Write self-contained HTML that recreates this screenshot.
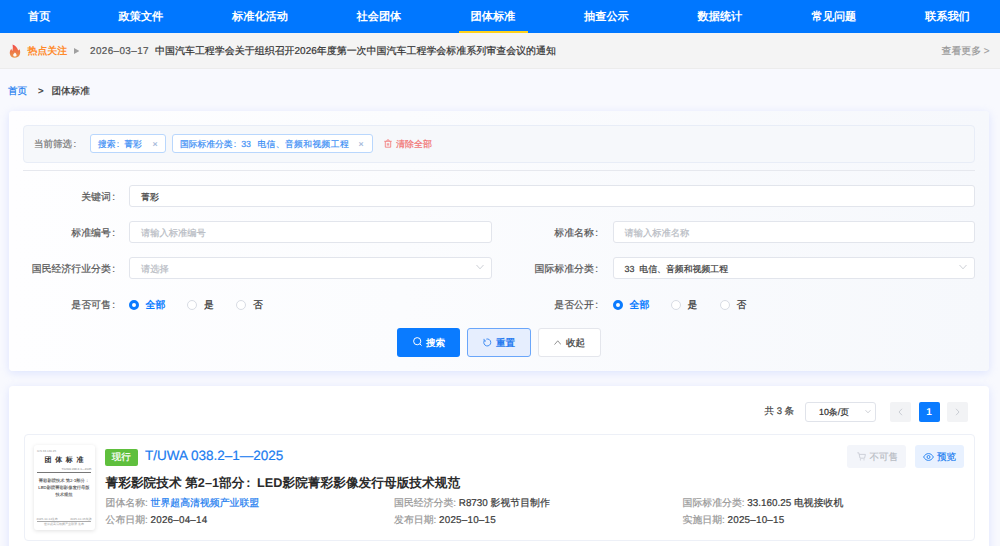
<!DOCTYPE html>
<html><head><meta charset="utf-8">
<style>
*{box-sizing:border-box;margin:0;padding:0}
html,body{width:1000px;height:546px;overflow:hidden}
body{text-rendering:geometricPrecision;-webkit-text-stroke-width:.2px;font-family:"Liberation Sans",sans-serif;background:#f8f9fe;position:relative;color:#333}
.a{position:absolute;white-space:nowrap}
#nav{position:absolute;left:0;top:0;width:1000px;height:33px;background:#0077ff}
#nav .it{position:absolute;top:9.5px;font-size:11.2px;line-height:14px;font-weight:bold;-webkit-text-stroke-width:0;color:#fff}
#nav .ul{position:absolute;left:459px;top:30.5px;width:68.5px;height:2.5px;background:#ffd21a}
#hot{position:absolute;left:0;top:33px;width:1000px;height:36px;background:#f4f4f4;border-bottom:1px solid #ececec}
#hot .t{font-size:9.9px;line-height:12px;top:12.5px}
.card{position:absolute;background:#fdfdff;border-radius:4px;box-shadow:0 2px 8px rgba(165,182,255,.32)}
.lbl{font-size:9.9px;line-height:12px;color:#555;text-align:right}
.inp{position:absolute;height:22px;background:#fff;border:1px solid #e2e5ec;border-radius:3px}
.ph{position:absolute;left:11px;top:4.5px;font-size:9.25px;line-height:12px;color:#b8bcc4;white-space:nowrap}
.val{position:absolute;left:11px;top:4.5px;font-size:8.9px;line-height:12px;color:#3a3a3a;white-space:nowrap}
.chev{position:absolute;right:7.5px;top:6px;width:8px;height:6px}
.radio{position:absolute;width:10px;height:10px;border-radius:50%;border:1px solid #d8dce4;background:#fff}
.radio.on{border:3px solid #0a7bff}
.rt{font-size:9.9px;line-height:12px;color:#333}
.rt.on{color:#0a7bff;font-weight:bold;-webkit-text-stroke-width:0}
.tag{position:absolute;top:134px;height:19px;border:1px solid #b9d7fd;border-radius:3px;background:#fff}
.tag span{position:absolute;top:3px;font-size:8.75px;line-height:12px;color:#3d8ff5;white-space:nowrap}
.fc{display:inline-block;font-style:normal;width:1em;padding-left:.15em}
.cl{margin-left:1.5px}
b,.bd{-webkit-text-stroke-width:0}
.btn{position:absolute;top:328px;height:28.5px;border-radius:3px}
</style></head><body>

<div id="nav">
  <div class="it" style="left:28px">首页</div>
  <div class="it" style="left:118.5px">政策文件</div>
  <div class="it" style="left:232px">标准化活动</div>
  <div class="it" style="left:356.5px">社会团体</div>
  <div class="it" style="left:470.5px">团体标准</div>
  <div class="it" style="left:584px">抽查公示</div>
  <div class="it" style="left:697.5px">数据统计</div>
  <div class="it" style="left:811.5px">常见问题</div>
  <div class="it" style="left:925px">联系我们</div>
  <div class="ul"></div>
</div>

<div id="hot">
  <svg class="a" style="left:9px;top:10.5px" width="12" height="14" viewBox="0 0 12 14">
    <defs><linearGradient id="fg" x1="0" y1="0" x2="0" y2="1"><stop offset="0" stop-color="#f2484a"/><stop offset=".55" stop-color="#ee7a48"/><stop offset="1" stop-color="#e9974e"/></linearGradient></defs>
    <path d="M3.6 0.5C6.6 1.8 8.6 3.8 9.2 6.6C9.6 6.2 10.1 5.8 10.4 5.3C11.4 7 11.5 9.2 10.6 11C9.7 12.8 7.9 13.8 5.8 13.8C3.2 13.8 1 12 0.8 9.4C0.6 7.6 1.4 6 2.4 4.8C2.5 5.8 2.8 6.6 3.4 7C3.9 4.8 4 2.6 3.6 0.5Z" fill="url(#fg)"/>
    <path d="M5.8 8.4C6.7 9.2 7.7 10 7.6 11.2C7.5 12.2 6.7 12.6 5.9 12.6C5 12.6 4.2 12 4.2 11C4.2 9.9 5.2 9.3 5.8 8.4Z" fill="#fff" opacity=".95"/>
  </svg>
  <div class="a t" style="left:27.5px;color:#ff8a2c;font-weight:bold;-webkit-text-stroke-width:0">热点关注</div>
  <svg class="a" style="left:73.5px;top:15px" width="5.5" height="6" viewBox="0 0 5.5 6"><path d="M0 0L5.5 3L0 6Z" fill="#a0a0a0"/></svg>
  <div class="a t" style="left:90px;color:#555;letter-spacing:0.4px">2026–03–17</div>
  <div class="a t" style="left:155px;color:#333;font-size:9.98px">中国汽车工程学会关于组织召开2026年度第一次中国汽车工程学会标准系列审查会议的通知</div>
  <div class="a t" style="left:941.5px;color:#999">查看更多 &gt;</div>
</div>

<div class="a" style="left:8px;top:86px;font-size:9.6px;line-height:12px;color:#1a7cf0">首页</div>
<div class="a" style="left:38px;top:86px;font-size:9.6px;line-height:12px;color:#333">&gt;</div>
<div class="a" style="left:51.5px;top:86px;font-size:9.6px;line-height:12px;color:#333">团体标准</div>

<!-- filter card -->
<div class="card" style="left:9px;top:110.5px;width:980px;height:260px;background:linear-gradient(90deg,#fefeff 0%,#fbfcfe 40%,#f6f8fc 100%)"></div>
<div class="a" style="left:23px;top:125px;width:952px;height:38px;background:#f6f8fb;border:1px solid #e8edf7;border-radius:4px"></div>
<div class="a lbl" style="left:34px;top:138.5px;color:#777;font-size:9.5px">当前筛选<span class="cl">:</span></div>
<div class="tag" style="left:89.5px;width:76px"><span style="left:7.5px">搜索<i class="fc">:</i>菁彩</span><span style="left:62px;color:#9cb4d8">×</span></div>
<div class="tag" style="left:171.5px;width:201px"><span style="left:7.5px">国际标准分类<i class="fc">:</i>33 <i style="font-style:normal;letter-spacing:.42px;margin-left:4px">电信、音频和视频工程</i></span><span style="left:186px;color:#9cb4d8">×</span></div>
<svg class="a" style="left:384px;top:139.2px" width="8" height="9" viewBox="0 0 8 9"><path d="M0.3 2.3H7.7M2.7 2.3L3.2 0.9H4.8L5.3 2.3M1.3 2.3V8.2H6.7V2.3M3.3 4.2V6.6M4.7 4.2V6.6" stroke="#f27272" stroke-width="0.8" fill="none"/></svg>
<div class="a" style="left:396px;top:138px;font-size:9px;line-height:12px;color:#f27272">清除全部</div>
<div class="a" style="left:23px;top:169.5px;width:952px;height:1.5px;background:#e6e8ee"></div>

<!-- row 1 -->
<div class="a lbl" style="left:0;width:115px;top:192px">关键词<span class="cl">:</span></div>
<div class="inp" style="left:129px;top:185.1px;width:846px"><span class="val">菁彩</span></div>
<!-- row 2 -->
<div class="a lbl" style="left:0;width:115px;top:228px">标准编号<span class="cl">:</span></div>
<div class="inp" style="left:129px;top:221.1px;width:363px"><span class="ph">请输入标准编号</span></div>
<div class="a lbl" style="left:400px;width:198px;top:228px">标准名称<span class="cl">:</span></div>
<div class="inp" style="left:612.5px;top:221.1px;width:362.5px"><span class="ph">请输入标准名称</span></div>
<!-- row 3 -->
<div class="a lbl" style="left:0;width:115px;top:264px">国民经济行业分类<span class="cl">:</span></div>
<div class="inp" style="left:129px;top:257.1px;width:363px"><span class="ph">请选择</span><svg class="chev" viewBox="0 0 8 6"><path d="M0.5 1L4 4.8L7.5 1" stroke="#c0c4cc" stroke-width="0.8" fill="none"/></svg></div>
<div class="a lbl" style="left:400px;width:198px;top:264px">国际标准分类<span class="cl">:</span></div>
<div class="inp" style="left:612.5px;top:257.1px;width:362.5px"><span class="val">33&nbsp; 电信、音频和视频工程</span><svg class="chev" viewBox="0 0 8 6"><path d="M0.5 1L4 4.8L7.5 1" stroke="#c0c4cc" stroke-width="0.8" fill="none"/></svg></div>
<!-- row 4 -->
<div class="a lbl" style="left:0;width:115px;top:299.5px">是否可售<span class="cl">:</span></div>
<div class="radio on" style="left:129px;top:299.5px"></div>
<div class="a rt on" style="left:145.5px;top:299.5px">全部</div>
<div class="radio" style="left:187px;top:299.5px"></div>
<div class="a rt" style="left:204px;top:299.5px">是</div>
<div class="radio" style="left:236px;top:299.5px"></div>
<div class="a rt" style="left:253px;top:299.5px">否</div>

<div class="a lbl" style="left:400px;width:198px;top:299.5px">是否公开<span class="cl">:</span></div>
<div class="radio on" style="left:612.5px;top:299.5px"></div>
<div class="a rt on" style="left:629.5px;top:299.5px">全部</div>
<div class="radio" style="left:670.5px;top:299.5px"></div>
<div class="a rt" style="left:687.5px;top:299.5px">是</div>
<div class="radio" style="left:719.5px;top:299.5px"></div>
<div class="a rt" style="left:736.5px;top:299.5px">否</div>

<!-- buttons -->
<div class="btn" style="left:397px;width:63px;background:#0a7bff"></div>
<svg class="a" style="left:412.5px;top:337px" width="9.5" height="9.5" viewBox="0 0 9.5 9.5"><circle cx="4.2" cy="4.2" r="3.6" stroke="#fff" stroke-width="1" fill="none"/><path d="M6.9 6.9L8.6 8.6" stroke="#fff" stroke-width="1"/></svg>
<div class="a" style="left:426px;top:337.75px;font-size:9.55px;line-height:12px;font-weight:bold;-webkit-text-stroke-width:0;color:#fff">搜索</div>
<div class="btn" style="left:467px;width:63.5px;background:#e6eefe;border:1px solid #6aa6fa"></div>
<svg class="a" style="left:483px;top:337.5px" width="9" height="9" viewBox="0 0 9 9"><path d="M1.2 2.8A3.5 3.5 0 1 0 3.3 1.1" stroke="#3384f2" stroke-width="0.9" fill="none"/><path d="M1.0 0.9L1.2 2.9L3.0 3.0" stroke="#3384f2" stroke-width="0.9" fill="none"/></svg>
<div class="a" style="left:496px;top:337.75px;font-size:9.55px;line-height:12px;font-weight:bold;-webkit-text-stroke-width:0;color:#2a7cf0">重置</div>
<div class="btn" style="left:537.5px;width:63px;background:#fff;border:1px solid #e4e6ec"></div>
<svg class="a" style="left:553.75px;top:339.5px" width="7.5" height="5" viewBox="0 0 7.5 5"><path d="M0.5 4.6L3.75 0.8L7 4.6" stroke="#777" stroke-width="0.8" fill="none"/></svg>
<div class="a" style="left:566px;top:337.75px;font-size:9.55px;line-height:12px;font-weight:bold;-webkit-text-stroke-width:0;color:#555">收起</div>

<!-- results card -->
<div class="card" style="left:9px;top:386px;width:980px;height:200px;background:#fff"></div>
<div class="a" style="left:764.5px;top:405.5px;font-size:9.5px;line-height:12px;color:#444">共 3 条</div>
<div class="a" style="left:805px;top:402px;width:71px;height:19.5px;border:1px solid #e0e3ea;border-radius:3px;background:#fff"></div>
<div class="a" style="left:819px;top:406px;font-size:8.9px;line-height:12px;color:#333">10条/页</div>
<svg class="a" style="left:864.5px;top:409px" width="6" height="5" viewBox="0 0 6 5"><path d="M0.5 1.2L3 3.8L5.5 1.2" stroke="#c0c4cc" stroke-width="0.8" fill="none"/></svg>
<div class="a" style="left:890px;top:402px;width:21px;height:19.5px;background:#f2f3f5;border-radius:2px"></div>
<svg class="a" style="left:898px;top:408px" width="5" height="8" viewBox="0 0 5 8"><path d="M4 0.8L1 4L4 7.2" stroke="#c0c4cc" stroke-width="0.8" fill="none"/></svg>
<div class="a" style="left:918.5px;top:402px;width:21px;height:19.5px;background:#0a7bff;border-radius:2px"></div>
<div class="a" style="left:918.5px;top:407px;width:21px;text-align:center;font-size:10px;line-height:12px;font-weight:bold;-webkit-text-stroke-width:0;color:#fff">1</div>
<div class="a" style="left:947px;top:402px;width:21px;height:19.5px;background:#f2f3f5;border-radius:2px"></div>
<svg class="a" style="left:955px;top:408px" width="5" height="8" viewBox="0 0 5 8"><path d="M1 0.8L4 4L1 7.2" stroke="#c0c4cc" stroke-width="0.8" fill="none"/></svg>

<!-- result item -->
<div class="a" style="left:23.5px;top:434px;width:951.5px;height:107px;border:1px solid #edf0f7;border-radius:4px;background:#fff"></div>

<!-- thumbnail -->
<div class="a" style="left:33.5px;top:445px;width:61px;height:85px;background:#fff;border-radius:3px;box-shadow:0 1px 4px rgba(0,0,0,.12);overflow:hidden">
  <div class="a" style="left:3.5px;top:4.5px;font-size:3px;line-height:3px;color:#999;-webkit-text-stroke-width:0">ICS 33.160.25</div>
  <div class="a" style="left:0;width:61px;top:12px;text-align:center;font-size:7px;line-height:8px;font-weight:bold;-webkit-text-stroke-width:0;color:#333;letter-spacing:3.6px;text-indent:3.6px">团体标准</div>
  <div class="a" style="right:3px;top:22.5px;font-size:3px;line-height:3px;color:#888;-webkit-text-stroke-width:0">T/UWA 038.2-1—2025</div>
  <div class="a" style="left:3.5px;top:26.5px;width:54px;height:0.5px;background:#777"></div>
  <div class="a" style="left:0;width:61px;top:32px;text-align:center;font-size:4.3px;line-height:7px;color:#555;white-space:normal;padding:0 4px;-webkit-text-stroke-width:0.1px">菁彩影院技术 第2-1部分：LED影院菁彩影像发行母版技术规范</div>
  <div class="a" style="left:3px;top:72.5px;font-size:3px;line-height:3px;color:#999;-webkit-text-stroke-width:0">2025-10-14发布</div>
  <div class="a" style="right:3px;top:72.5px;font-size:3px;line-height:3px;color:#999;-webkit-text-stroke-width:0">2025-10-15实施</div>
  <div class="a" style="left:3.5px;top:76px;width:54px;height:0.5px;background:#aaa"></div>
  <div class="a" style="left:0;width:61px;top:77.5px;text-align:center;font-size:3px;line-height:3px;color:#999;-webkit-text-stroke-width:0">世界超高清视频产业联盟 发布</div>
</div>

<div class="a" style="left:105px;top:449px;width:32.5px;height:16.5px;background:#5fbf3d;border-radius:2px"></div>
<div class="a" style="left:105px;top:452px;width:32.5px;text-align:center;font-size:9.5px;line-height:12px;color:#fff">现行</div>
<div class="a" style="left:145px;top:446.5px;font-size:13.5px;line-height:17px;color:#1a7cf0">T/UWA 038.2–1—2025</div>
<div class="a" style="left:105.5px;top:475px;font-size:12.7px;line-height:16px;font-weight:bold;-webkit-text-stroke-width:0;color:#2b2b2b">菁彩影院技术 第2–1部分<i class="fc">:</i>LED影院菁彩影像发行母版技术规范</div>

<div class="a" style="left:105.5px;top:498px;font-size:9.9px;line-height:12px;color:#999">团体名称: <span style="color:#1a7cf0">世界超高清视频产业联盟</span></div>
<div class="a" style="left:105.5px;top:515px;font-size:9.9px;line-height:12px;color:#999">公布日期: <span style="color:#3a3a3a;letter-spacing:.2px">2026–04–14</span></div>
<div class="a" style="left:394px;top:498px;font-size:9.9px;line-height:12px;color:#999">国民经济分类: <span style="color:#3a3a3a">R8730 影视节目制作</span></div>
<div class="a" style="left:394px;top:515px;font-size:9.9px;line-height:12px;color:#999">发布日期: <span style="color:#3a3a3a;letter-spacing:.2px">2025–10–15</span></div>
<div class="a" style="left:682.5px;top:498px;font-size:9.9px;line-height:12px;color:#999">国际标准分类: <span style="color:#3a3a3a">33.160.25 电视接收机</span></div>
<div class="a" style="left:682.5px;top:515px;font-size:9.9px;line-height:12px;color:#999">实施日期: <span style="color:#3a3a3a;letter-spacing:.2px">2025–10–15</span></div>

<div class="a" style="left:847px;top:445px;width:59px;height:23px;background:#f3f5fa;border-radius:3px"></div>
<svg class="a" style="left:856.5px;top:452px" width="9" height="9" viewBox="0 0 9 9"><path d="M0.3 0.8H1.8L3 6.2H7.6L8.4 2.4H2.2" stroke="#c4c8d0" stroke-width="0.8" fill="none"/><circle cx="3.4" cy="7.8" r="0.6" fill="#c4c8d0"/><circle cx="7" cy="7.8" r="0.6" fill="#c4c8d0"/></svg>
<div class="a" style="left:869.5px;top:451.5px;font-size:9.5px;line-height:12px;color:#b8bcc4">不可售</div>
<div class="a" style="left:914.5px;top:445px;width:49px;height:23px;background:#e8f1ff;border-radius:3px"></div>
<svg class="a" style="left:923px;top:453px" width="11" height="8" viewBox="0 0 11 8"><path d="M0.6 4C2 1.6 3.6 0.6 5.5 0.6C7.4 0.6 9 1.6 10.4 4C9 6.4 7.4 7.4 5.5 7.4C3.6 7.4 2 6.4 0.6 4Z" stroke="#1a7cf0" stroke-width="0.9" fill="none"/><circle cx="5.5" cy="4" r="1.5" stroke="#1a7cf0" stroke-width="0.9" fill="none"/></svg>
<div class="a" style="left:937px;top:451.5px;font-size:9.5px;line-height:12px;color:#1a7cf0">预览</div>

</body></html>
